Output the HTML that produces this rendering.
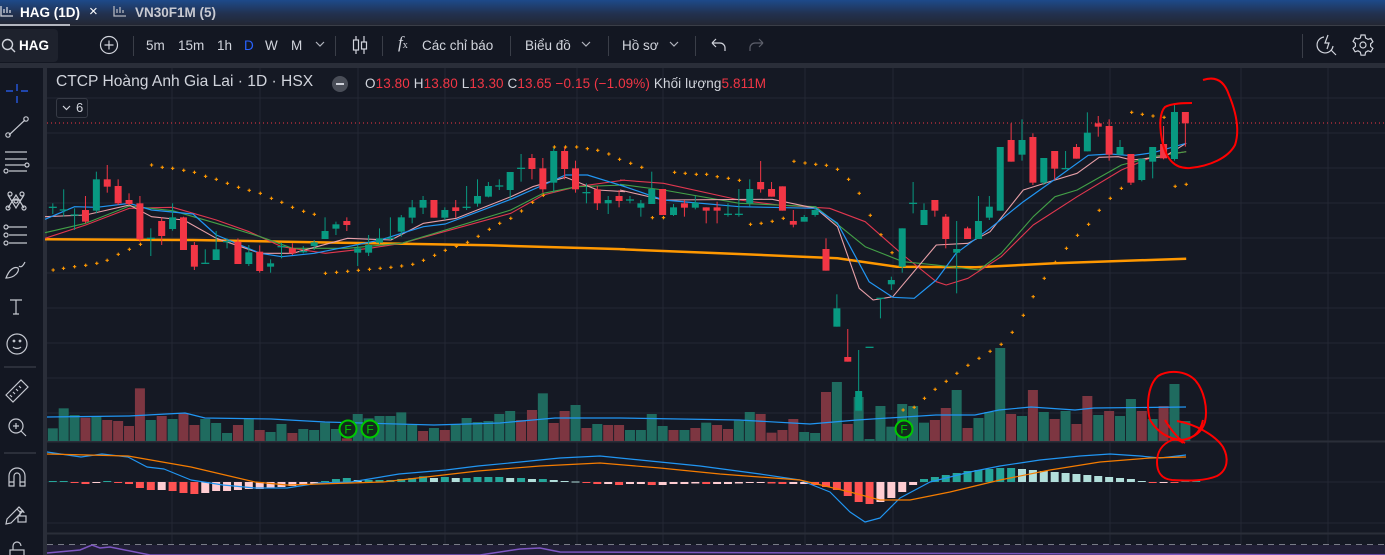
<!DOCTYPE html>
<html><head><meta charset="utf-8">
<style>
*{margin:0;padding:0;box-sizing:border-box}
body{width:1385px;height:555px;overflow:hidden;background:#151924;font-family:"Liberation Sans","Noto Sans CJK SC",sans-serif;position:relative;color:#d1d4dc}
.abs{position:absolute;white-space:nowrap}
#tabs{left:0;top:0;width:1385px;height:26px;background:linear-gradient(#1d4a8a,#22314f 55%,#232733);border-bottom:1px solid #3a3e48}
#bar{left:0;top:26px;width:1385px;height:37px;background:#131722}
#band{left:0;top:63px;width:1385px;height:5px;background:#2a2e39}
#lt{left:0;top:68px;width:43px;height:487px;background:#131722}
#ltd{left:43px;top:68px;width:4px;height:487px;background:#2a2e39}
.t{font-size:13.5px;color:#d1d4dc}
.sep{position:absolute;top:36px;width:1px;height:20px;background:#3a3e48}
.leg{font-size:13.5px;letter-spacing:0.1px}
.red{color:#f23645}
</style></head><body>
<div id="tabs" class="abs"></div>
<div class="abs" style="left:0;top:24px;width:70px;height:2px;background:#b2b5be"></div>
<svg class="abs" style="left:0;top:4px" width="16" height="14"><path d="M1 2v10h12" stroke="#d1d4dc" fill="none" stroke-width="1.3"/><path d="M4 9v-4M7 9v-6M10 9v-3" stroke="#d1d4dc" stroke-width="1.3"/></svg>
<div class="abs" style="left:20px;top:5px;font-size:13.5px;font-weight:bold;color:#fff">HAG (1D)</div>
<div class="abs" style="left:89px;top:3px;font-size:15px;color:#fff">×</div>
<svg class="abs" style="left:113px;top:4px" width="16" height="14"><path d="M1 2v10h12" stroke="#b2b5be" fill="none" stroke-width="1.3"/><path d="M4 9v-4M7 9v-6M10 9v-3" stroke="#b2b5be" stroke-width="1.3"/></svg>
<div class="abs" style="left:135px;top:5px;font-size:13.5px;font-weight:bold;color:#c8cad2">VN30F1M (5)</div>

<div id="bar" class="abs"></div>
<div class="abs" style="left:0;top:29px;width:58px;height:33px;background:#1e222d;border-radius:0 4px 4px 0"></div>
<svg class="abs" style="left:1px;top:38px" width="16" height="16"><circle cx="6.5" cy="6.5" r="5" stroke="#d1d4dc" stroke-width="1.4" fill="none"/><path d="M10 10l4 4" stroke="#d1d4dc" stroke-width="1.4"/></svg>
<div class="abs t" style="left:19px;top:38px;font-weight:bold;color:#fff">HAG</div>
<svg class="abs" style="left:99px;top:35px" width="20" height="20"><circle cx="10" cy="10" r="8.5" stroke="#d1d4dc" stroke-width="1.2" fill="none"/><path d="M10 5.5v9M5.5 10h9" stroke="#d1d4dc" stroke-width="1.2"/></svg>
<div class="sep" style="left:133px"></div>
<div class="abs t" style="left:146px;top:38px">5m</div>
<div class="abs t" style="left:178px;top:38px">15m</div>
<div class="abs t" style="left:217px;top:38px">1h</div>
<div class="abs t" style="left:244px;top:38px;color:#2962ff">D</div>
<div class="abs t" style="left:265px;top:38px">W</div>
<div class="abs t" style="left:291px;top:38px">M</div>
<svg class="abs" style="left:315px;top:40px" width="10" height="8"><path d="M1 2l4 4 4-4" stroke="#b2b5be" fill="none" stroke-width="1.2"/></svg>
<div class="sep" style="left:335px"></div>
<svg class="abs" style="left:351px;top:34px" width="18" height="22"><path d="M5 2v18M13 2v18" stroke="#d1d4dc" stroke-width="1.2"/><rect x="2.5" y="6" width="5" height="10" fill="#131722" stroke="#d1d4dc" stroke-width="1.2"/><rect x="10.5" y="8" width="5" height="7" fill="#131722" stroke="#d1d4dc" stroke-width="1.2"/></svg>
<div class="sep" style="left:382px"></div>
<div class="abs" style="left:398px;top:33px;font-family:'Liberation Serif',serif;font-style:italic;font-size:17px;color:#d1d4dc">f<span style="font-size:10px;font-style:normal">x</span></div>
<div class="abs t" style="left:422px;top:38px">Các chỉ báo</div>
<div class="sep" style="left:510px"></div>
<div class="abs t" style="left:525px;top:38px">Biểu đồ</div>
<svg class="abs" style="left:581px;top:40px" width="10" height="8"><path d="M1 2l4 4 4-4" stroke="#b2b5be" fill="none" stroke-width="1.2"/></svg>
<div class="sep" style="left:608px"></div>
<div class="abs t" style="left:622px;top:38px">Hồ sơ</div>
<svg class="abs" style="left:669px;top:40px" width="10" height="8"><path d="M1 2l4 4 4-4" stroke="#b2b5be" fill="none" stroke-width="1.2"/></svg>
<div class="sep" style="left:695px"></div>
<svg class="abs" style="left:709px;top:37px" width="18" height="16"><path d="M3 6h8a5 5 0 0 1 5 5v3M3 6l4-4M3 6l4 4" stroke="#d1d4dc" fill="none" stroke-width="1.2"/></svg>
<svg class="abs" style="left:748px;top:37px" width="18" height="16"><path d="M15 6h-8a5 5 0 0 0-5 5v3M15 6l-4-4M15 6l-4 4" stroke="#5d606b" fill="none" stroke-width="1.2"/></svg>
<div class="sep" style="left:1302px;top:34px;height:24px"></div>
<svg class="abs" style="left:1315px;top:33px" width="24" height="24"><path d="M9 4a8 8 0 1 0 9 9" stroke="#d1d4dc" fill="none" stroke-width="1.2"/><path d="M16 17l5 5M13 2l-3 8h4l-2 6" stroke="#d1d4dc" fill="none" stroke-width="1.2"/></svg>
<svg class="abs" style="left:1352px;top:34px" width="22" height="22"><path d="M9 1h4l.6 3 2.4 1.4 2.9-1 2 3.4-2.3 2v2.6l2.3 2-2 3.4-2.9-1-2.4 1.4-.6 3H9l-.6-3-2.4-1.4-2.9 1-2-3.4 2.3-2V9.4l-2.3-2 2-3.4 2.9 1L8.4 4z" stroke="#d1d4dc" fill="none" stroke-width="1.2"/><circle cx="11" cy="11" r="3" stroke="#d1d4dc" fill="none" stroke-width="1.2"/></svg>

<div id="band" class="abs"></div>
<div id="lt" class="abs"></div>
<div id="ltd" class="abs"></div>

<svg id="ch" class="abs" style="left:0;top:0" width="1385" height="555"></svg>

<svg class="abs" style="left:0;top:68px" width="43" height="487" fill="none" stroke="#c5c8d0" stroke-width="1.2">
<path d="M17 16v7M17 28v7M6 23h7M21 23h7" stroke="#2962ff"/>
<path d="M9 67l16-15"/><circle cx="8" cy="67" r="2.2"/><circle cx="26" cy="51" r="2.2"/>
<path d="M5 84h22M5 91h22M5 97h20M9 103h18"/><circle cx="27" cy="97" r="2"/><circle cx="6" cy="103" r="2"/>
<path d="M8 140l8-13 8 13M8 127l8 13 8-13M12 132h9"/><circle cx="8" cy="140" r="2"/><circle cx="24" cy="140" r="2"/><circle cx="10" cy="126" r="2"/><circle cx="22" cy="126" r="2"/><circle cx="16" cy="133" r="2"/>
<path d="M8 159h19M9 167h18M9 175h18"/><circle cx="6" cy="159" r="2"/><circle cx="6" cy="167" r="2"/><circle cx="6" cy="175" r="2"/>
<path d="M6 210c3-8 8-12 12-10 2 3-3 10-12 10zM19 198c2 2 4 0 6-4"/>
<path d="M10 232h12M16 232v14M13 246h6"/>
<circle cx="17" cy="276" r="10"/><path d="M13 279c2 2 6 2 8 0"/><circle cx="14" cy="273" r="0.8"/><circle cx="20" cy="273" r="0.8"/>
<path d="M4 299h32" stroke="#3a3e48"/>
<path d="M6 327l15-15 7 7-15 15zM10 327l2 2M13 324l2 2M16 321l2 2M19 318l2 2"/>
<circle cx="16" cy="358" r="7"/><path d="M21 363l5 5M13 358h6M16 355v6"/>
<path d="M4 385h32" stroke="#3a3e48"/>
<path d="M9 418v-10a8 8 0 0 1 16 0v10h-5v-10a3 3 0 0 0-6 0v10zM9 414h5M20 414h5"/>
<path d="M7 451l12-12 4 4-12 12-5 1zM17 441l4 4"/><rect x="18" y="448" width="8" height="6"/><path d="M20 448v-3a2 2 0 0 1 4 0"/>
<rect x="10" y="482" width="14" height="10"/><path d="M13 482v-4a4 4 0 0 1 8 0"/>
</svg>

<div class="abs" style="left:56px;top:73px;font-size:15.6px;color:#d1d4dc">CTCP Hoàng Anh Gia Lai · 1D · HSX</div>
<div class="abs" style="left:332px;top:76px;width:16px;height:16px;border-radius:50%;background:#4a4e58"><div style="position:absolute;left:4px;top:7px;width:8px;height:2px;background:#d1d4dc"></div></div>
<div class="abs leg" style="left:365px;top:76px">O<span class="red">13.80</span> H<span class="red">13.80</span> L<span class="red">13.30</span> C<span class="red">13.65</span> <span class="red">−0.15 (−1.09%)</span> Khối lượng<span class="red">5.811M</span></div>
<div class="abs" style="left:56px;top:98px;width:32px;height:20px;border:1px solid #363a45;border-radius:3px;background:#151924"></div>
<svg class="abs" style="left:62px;top:104px" width="10" height="8"><path d="M1 2l3.5 3.5L8 2" stroke="#d1d4dc" fill="none" stroke-width="1.2"/></svg>
<div class="abs" style="left:76px;top:100px;font-size:13px;color:#d1d4dc">6</div>

<script>
var S='';
function L(x1,y1,x2,y2,c,w,extra){S+='<line x1="'+x1+'" y1="'+y1+'" x2="'+x2+'" y2="'+y2+'" stroke="'+c+'" stroke-width="'+(w||1)+'" '+(extra||'')+'/>';}
function R(x,y,w,h,c){S+='<rect x="'+x+'" y="'+y+'" width="'+w+'" height="'+h+'" fill="'+c+'"/>';}
var gc='#232734';
[98,133,168,203,238,273,308,343,378,413,523].forEach(function(y){L(47,y,1385,y,gc,1);});
[172,260,358,445,577,663,805,893,1023,1110,1241,1328].forEach(function(x){L(x,68,x,545,gc,1);});
L(47,441.5,1385,441.5,'#2a2e39',2);L(47,533.5,1385,533.5,'#2a2e39',2);
L(47,482,1385,482,'#232734',1);
R(47,545,1338,10,'#211f36');
L(47,544.5,1385,544.5,'#787b86',1,'stroke-dasharray="6 5"');
S+='<polyline points="47,553 80,550 92,545 100,548 110,547 150,555 480,555 520,549 540,548 560,552 1385,555" fill="none" stroke="#7e57c2" stroke-width="1.5"/>';
L(47,123,1385,123,'#f23645',1,'stroke-dasharray="1 3"');
var G='#089981',Rd='#f23645';
var A=[['g',262,262,250,282],['g',270,270,208,290],['g',285,285,265,330],['r',270,305,228,310],['g',178,272,155,280],['r',178,200,135,218],['r',198,250,178,255],['r',240,252,220,255],['r',250,358,228,365],['g',355,355,325,408],['r',303,348,292,375],['g',292,327,250,332],['r',292,390,290,390],['r',375,440,366,450],['g',430,430,388,432],['g',388,420,333,420],['g',365,365,355,385],['r',365,432,355,432],['g',397,432,375,438],['r',395,453,376,458],['g',430,440,418,458],['g',380,380,368,415],['r',385,400,370,405],['g',395,395,378,400],['g',367,378,360,390],['g',333,357,292,357],['g',313,326,305,345],['r',303,315,292,333],['g',385,398,373,438],['g',375,398,345,408],['g',355,368,325,372],['g',355,355,292,360],['g',292,335,285,350],['g',262,293,240,310],['g',240,263,228,282],['r',240,293,240,293],['g',270,293,262,300],['r',262,273,240,293],['g',262,262,198,270],['g',228,251,178,260],['g',198,230,186,232],['g',198,198,178,210],['g',156,210,156,238],['g',145,145,102,185],['r',114,147,102,178],['r',145,208,114,218],['g',93,188,82,218],['r',93,147,82,178],['r',145,208,122,218],['g',218,218,190,250],['r',208,250,198,270],['g',240,250,228,282],['r',228,243,210,262]];
var B=[['g',330,330,318,340],['g',340,353,330,380],['g',297,342,245,342],['r',297,375,297,375],['g',352,375,342,378],['r',340,353,330,380],['g',338,353,318,358],['r',352,362,352,400],['r',352,362,335,400],['g',373,373,340,380],['g',373,373,297,380],['g',297,340,268,350],['r',276,298,213,308],['r',297,320,276,320],['r',289,362,289,362],['r',393,404,360,412],['g',381,395,375,395],['g',360,375,350,380],['r',477,542,445,542],['g',655,710,613,710],['r',801,815,717,815],['g',903,962,780,962],['g',772,772,772,772],['g',625,625,625,685],['g',570,583,560,600],['g',415,530,415,548],['g',340,340,276,370],['g',360,405,340,405],['r',330,362,330,380],['r',380,447,372,475],['g',477,488,393,610],['r',415,447,410,447],['g',393,447,318,447],['g',350,383,318,390],['g',171,362,171,362],['r',150,215,100,215],['g',150,194,88,212],['r',141,278,130,285],['g',204,278,204,285],['r',183,236,183,270],['g',236,236,183,236],['r',171,206,162,206],['g',128,184,67,184],['r',100,110,78,140],['r',108,194,88,212],['g',171,194,150,194],['r',192,278,192,285],['g',206,270,206,274],['g',171,215,171,265],['r',162,205,108,208],['g',66,207,45,212],['r',66,100,66,170]];
var C=[];A.forEach(function(c){C.push([c[0],120+c[1]/3,120+c[2]/3,120+c[3]/3,120+c[4]/3]);});
B.forEach(function(c){C.push([c[0],90+c[1]/3,90+c[2]/3,90+c[3]/3,90+c[4]/3]);});
function X(i){return 52.8+i*10.89;}
var VA=[[925,'g'],[865,'g'],[885,'g'],[893,'r'],[890,'g'],[900,'r'],[903,'r'],[918,'r'],[805,'r'],[900,'g'],[888,'r'],[897,'g'],[880,'r'],[915,'r'],[897,'g'],[909,'g'],[939,'g'],[915,'r'],[895,'g'],[930,'r'],[936,'g'],[912,'g'],[939,'r'],[927,'g'],[930,'g'],[908,'g'],[927,'g'],[955,'r'],[882,'g'],[895,'g'],[888,'g'],[888,'g'],[877,'g'],[915,'g'],[933,'r'],[924,'g'],[930,'r'],[912,'g'],[894,'g'],[906,'g'],[903,'g'],[882,'g'],[873,'g'],[900,'r'],[870,'r'],[820,'g'],[909,'r'],[873,'r'],[855,'g'],[924,'r'],[912,'g'],[915,'r']];
var VB=[1005,1012,1020,1020,972,1008,1020,1020,1014,998,1005,1017,992,966,972,1028,1020,987,1026,1029,906,876,1002,921,1047,948,1010,942,948,998,990,954,900,1014,984,966,774,972,978,900,966,987,963,1002,918,975,963,978,927,963,987,948,882,993];
var VBc='rggggrgrgrrggrrrrggrgrgggggggrrgrgggrgrgrgrrgrggrgr';
var V=[];VA.forEach(function(v){V.push([120+v[0]/3,v[1]]);});
for(var k=0;k<53;k++){V.push([90+VB[k+(k>0?1:0)]/3,VBc[k]||'g']);}
V=V.slice(0,105);
V.forEach(function(v,i){var x=X(i)-5;R(x,v[0],10,441-v[0],v[1]=='g'?'#1f6b5f':'#7d3641');});
function P(pts,c,w,sec){var s='';pts.forEach(function(p){var x=sec=='a'?45+p[0]/2.703:620+p[0]/2.529;var y=sec=='a'?120+p[1]/3:90+p[1]/3;s+=x.toFixed(1)+','+y.toFixed(1)+' ';});S+='<polyline points="'+s+'" fill="none" stroke="'+c+'" stroke-width="'+w+'" stroke-linejoin="round"/>';}
function PR(s,c,w){S+='<polyline points="'+s+'" fill="none" stroke="'+c+'" stroke-width="'+w+'" stroke-linejoin="round"/>';}
PR('47,417 129,416 185,413 205,418 271,419 325,422 434,425 500,423 555,418 620,418 739,420 810,424 857,420 936,415 975,415 999,410 1031,407 1075,410 1094,408 1186,407','#2196f3',1.2);
P([[0,358],[400,360],[800,368],[1200,376],[1568,388]],'#ff9800',2.5,'a');
P([[0,478],[300,492],[550,505],[700,530],[900,532],[1100,520],[1432,506]],'#ff9800',2.5,'b');
P([[0,355],[110,315],[228,265],[345,262],[463,300],[552,335],[640,380],[758,400],[877,385],[964,370],[1112,325],[1259,280],[1347,225],[1437,200],[1568,180]],'#e0374f',1.1,'a');
P([[0,270],[110,280],[302,330],[400,345],[530,355],[620,395],[716,495],[800,575],[825,585],[880,565],[964,500],[1045,405],[1156,320],[1268,240],[1348,200],[1432,185]],'#e0374f',1.1,'b');
P([[0,338],[110,310],[228,258],[345,272],[463,310],[582,350],[669,385],[818,385],[964,370],[1053,340],[1259,270],[1347,220],[1437,200],[1568,195]],'#43a047',1.1,'a');
P([[0,283],[110,300],[302,340],[495,350],[620,470],[716,515],[800,525],[908,540],[964,490],[1045,380],[1100,320],[1156,300],[1268,225],[1348,200],[1432,185]],'#43a047',1.1,'b');
P([[0,290],[110,285],[228,255],[288,290],[375,300],[463,355],[582,400],[669,400],[818,355],[935,360],[1023,310],[1112,295],[1259,230],[1318,200],[1407,172],[1494,210],[1568,215]],'#e8a0a8',1.1,'a');
P([[0,300],[110,330],[385,328],[495,355],[550,410],[605,595],[640,630],[690,620],[800,465],[880,460],[936,425],[1020,300],[1100,270],[1156,250],[1212,202],[1260,200],[1294,210],[1376,200],[1432,160]],'#e8a0a8',1.1,'b');
P([[0,298],[80,260],[140,262],[228,250],[288,270],[400,282],[463,345],[582,400],[640,410],[728,400],[818,380],[906,360],[964,340],[1023,320],[1082,312],[1171,275],[1259,238],[1347,195],[1407,165],[1466,165],[1568,200]],'#2196f3',1.2,'a');
P([[0,285],[110,330],[302,350],[495,355],[550,400],[630,575],[690,622],[744,625],[800,570],[850,490],[936,415],[1020,335],[1100,268],[1184,196],[1240,192],[1294,197],[1348,188],[1432,160]],'#2196f3',1.2,'b');
C.forEach(function(c,i){var x=X(i),col=c[0]=='g'?G:Rd;L(x,c[3],x,c[4],col,1);var t=Math.min(c[1],c[2]),h=Math.abs(c[2]-c[1]);if(h<1.5){L(x-4,t,x+4,t,col,1.3);}else R(x-3.5,t,7,h,col);});
var PA=[[22,450],[50,445],[80,440],[110,436],[140,430],[168,421],[198,403],[228,388],[258,373],[288,135],[317,142],[345,145],[375,151],[404,157],[434,169],[463,178],[493,190],[523,202],[552,211],[582,220],[612,235],[640,247],[669,262],[699,274],[728,283],[758,460],[788,457],[818,454],[847,451],[877,448],[906,445],[935,442],[964,438],[994,433],[1023,421],[1053,406],[1082,391],[1112,379],[1142,367],[1171,349],[1201,328],[1229,310],[1259,295],[1288,273],[1318,247],[1347,226],[1377,81],[1407,81],[1437,81],[1466,86],[1494,91],[1524,102],[1553,118]];
var PB=[[27,220],[55,232],[82,383],[110,383],[138,247],[165,250],[193,253],[219,253],[246,260],[274,265],[302,271],[330,403],[357,400],[385,394],[413,385],[440,214],[468,219],[495,223],[522,226],[550,238],[578,268],[605,310],[633,376],[660,434],[688,488],[716,960],[744,952],[770,925],[797,898],[825,874],[852,850],[880,826],[908,805],[936,784],[964,763],[992,727],[1020,676],[1045,620],[1073,565],[1101,517],[1129,475],[1157,436],[1185,403],[1212,361],[1240,325],[1268,295],[1294,67],[1321,73],[1348,78],[1376,82],[1404,289],[1432,283]];
function dot(x,y){L(x-1.7,y,x+1.7,y,'#ff9800',1.1);L(x,y-1.7,x,y+1.7,'#ff9800',1.1);}
PA.forEach(function(p){dot(45+p[0]/2.703,120+p[1]/3);});
PB.forEach(function(p){dot(620+p[0]/2.529,90+p[1]/3);});
[[348,429],[370,429],[904,429]].forEach(function(f){S+='<circle cx="'+f[0]+'" cy="'+f[1]+'" r="8.5" fill="#13291c" stroke="#00c800" stroke-width="2"/><text x="'+f[0]+'" y="'+(f[1]+4.5)+'" text-anchor="middle" font-family="Liberation Sans" font-size="12" fill="#00c800">F</text>';});
var H=[1,1,-1,-2,-0.5,1,-1,-2,-6,-8,-8,-9,-11,-12,-11,-9,-9,-8,-7,-7,-6,-5,-4,-2.5,-1.5,1,3,4,2,2,2,2,3,4,5.7,4,5,4,4,5,5,5,4,4,3,3,2,1,0.5,-1,-2,-2,-3,-2,-2,-3,-3,-2,-2,-1.5,-2,-2,-2,-1.5,-1,-1,-1.5,-2,-2,-2,-3,-5,-8,-14,-20,-22,-20,-16,-10,-3,3,5,7,9,11,12,13,14,14,13,12,11,10,9,8,7,6,5,4,3,1,-1,-0.5,-1,1,1];
H.forEach(function(h,i){var p=i?H[i-1]:0,c;if(h>=0)c=h>=p?'#26a69a':'#b2dfdb';else c=h<p?'#ff5252':'#ffcdd2';var y=h>=0?482-h:482;R(X(i)-4,y,8,Math.max(Math.abs(h),1),c);});
PR('47,452 81,457 102,454 128,457 147,467 164,469 191,480 223,485 255,488 287,488 319,483 351,482 399,474 446,470 478,466 520,462 560,458 600,456 640,460 700,466 760,474 800,480 830,492 850,512 865,522 880,518 900,498 930,482 970,472 1000,466 1040,460 1080,456 1110,454 1140,456 1160,458 1186,455','#2196f3',1.2);
PR('47,454 128,456 191,467 255,482 287,485 319,484 383,482 478,471 540,466 600,463 660,468 720,474 800,480 850,492 880,500 910,500 950,492 1000,480 1050,470 1100,462 1150,458 1186,457','#f57c00',1.2);
var rc='#ff0000';
S+='<path d="M1203,80 C1215,76 1224,80 1229,95 C1236,112 1240,130 1235,145 C1228,158 1210,166 1190,168 C1175,169 1166,160 1162,140 C1159,125 1160,112 1165,107 C1172,103 1185,103 1192,103" fill="none" stroke="'+rc+'" stroke-width="2"/>';
S+='<path d="M1150,420 C1146,405 1148,385 1158,376 C1168,370 1185,370 1195,380 C1204,390 1208,408 1205,422 C1202,432 1195,437 1183,440" fill="none" stroke="'+rc+'" stroke-width="2"/>';
S+='<path d="M1165,420 C1172,432 1180,440 1185,443 M1177,421 C1195,424 1215,435 1223,447 C1229,458 1228,470 1217,476 C1205,481 1190,481 1172,480 C1160,479 1157,470 1157,462 C1157,452 1162,444 1172,440 C1176,439 1180,440 1183,443 M1150,420 C1158,433 1168,438 1180,440 C1190,440 1200,435 1203,420" fill="none" stroke="'+rc+'" stroke-width="2"/>';
document.getElementById('ch').innerHTML=S;
</script>
</body></html>
